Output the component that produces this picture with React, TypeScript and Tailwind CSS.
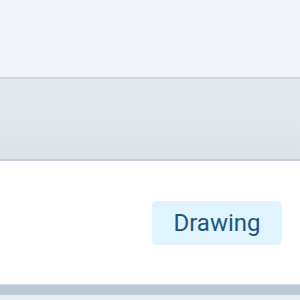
import React from "react";

export default function App() {
  return (
    <div className="w-[300px] h-[300px] overflow-hidden flex flex-col bg-white" style={{ fontFamily: "Roboto, 'Noto Sans', sans-serif" }}>
      <div className="h-[77px] bg-[#f1f5f9] shrink-0" />
      <div className="h-[2px] bg-[#cfd8e1] shrink-0" />
      <div className="h-[80px] shrink-0 bg-gradient-to-b from-[#e3e8ed] via-[#e3e8ed] to-[#dce2e7]" />
      <div className="h-[2px] bg-[#c8d1da] shrink-0" />
      <div className="flex-1 flex items-start justify-end pr-[18px] pt-[40px]">
        <div className="h-[44px] w-[130px] rounded-[5px] bg-[#e0f4fe] flex items-center justify-center text-[24px] text-[#1f5580]">
          Drawing
        </div>
      </div>
      <div className="h-[1px] bg-[#d8e0e6] shrink-0" />
      <div className="h-[10px] bg-[#bccad3] shrink-0" />
      <div className="h-[5px] bg-[#e9eef2] shrink-0" />
    </div>
  );
}
